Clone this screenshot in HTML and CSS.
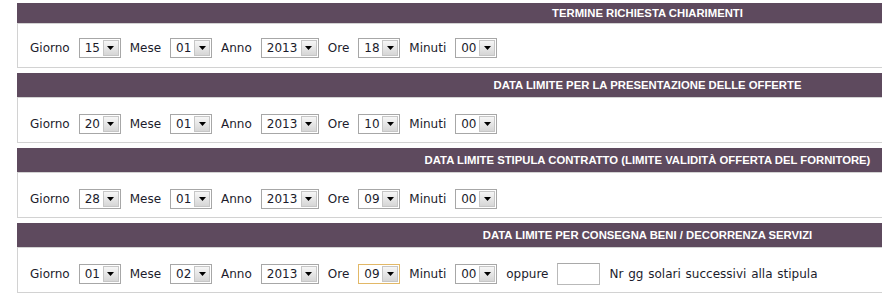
FILE: index.html
```html
<!DOCTYPE html>
<html lang="it">
<head>
    <meta charset="UTF-8">
    <title>Date e scadenze</title>
    <link rel="stylesheet" href="styles.css">
</head>
<body>
    <div class="page">

        <div class="section">
            <div class="head">TERMINE RICHIESTA CHIARIMENTI</div>
            <div class="row">
                <span class="lbl">Giorno</span>
                <span class="dd"><span class="val">15</span><span class="btn"><svg width="7" height="4" viewBox="0 0 7 4"><path d="M0 0h7L3.5 4z"/></svg></span></span>
                <span class="lbl">Mese</span>
                <span class="dd"><span class="val">01</span><span class="btn"><svg width="7" height="4" viewBox="0 0 7 4"><path d="M0 0h7L3.5 4z"/></svg></span></span>
                <span class="lbl">Anno</span>
                <span class="dd year"><span class="val">2013</span><span class="btn"><svg width="7" height="4" viewBox="0 0 7 4"><path d="M0 0h7L3.5 4z"/></svg></span></span>
                <span class="lbl">Ore</span>
                <span class="dd"><span class="val">18</span><span class="btn"><svg width="7" height="4" viewBox="0 0 7 4"><path d="M0 0h7L3.5 4z"/></svg></span></span>
                <span class="lbl">Minuti</span>
                <span class="dd"><span class="val">00</span><span class="btn"><svg width="7" height="4" viewBox="0 0 7 4"><path d="M0 0h7L3.5 4z"/></svg></span></span>
            </div>
        </div>

        <div class="section">
            <div class="head">DATA LIMITE PER LA PRESENTAZIONE DELLE OFFERTE</div>
            <div class="row">
                <span class="lbl">Giorno</span>
                <span class="dd"><span class="val">20</span><span class="btn"><svg width="7" height="4" viewBox="0 0 7 4"><path d="M0 0h7L3.5 4z"/></svg></span></span>
                <span class="lbl">Mese</span>
                <span class="dd"><span class="val">01</span><span class="btn"><svg width="7" height="4" viewBox="0 0 7 4"><path d="M0 0h7L3.5 4z"/></svg></span></span>
                <span class="lbl">Anno</span>
                <span class="dd year"><span class="val">2013</span><span class="btn"><svg width="7" height="4" viewBox="0 0 7 4"><path d="M0 0h7L3.5 4z"/></svg></span></span>
                <span class="lbl">Ore</span>
                <span class="dd"><span class="val">10</span><span class="btn"><svg width="7" height="4" viewBox="0 0 7 4"><path d="M0 0h7L3.5 4z"/></svg></span></span>
                <span class="lbl">Minuti</span>
                <span class="dd"><span class="val">00</span><span class="btn"><svg width="7" height="4" viewBox="0 0 7 4"><path d="M0 0h7L3.5 4z"/></svg></span></span>
            </div>
        </div>

        <div class="section">
            <div class="head">DATA LIMITE STIPULA CONTRATTO (LIMITE VALIDITÀ OFFERTA DEL FORNITORE)</div>
            <div class="row">
                <span class="lbl">Giorno</span>
                <span class="dd"><span class="val">28</span><span class="btn"><svg width="7" height="4" viewBox="0 0 7 4"><path d="M0 0h7L3.5 4z"/></svg></span></span>
                <span class="lbl">Mese</span>
                <span class="dd"><span class="val">01</span><span class="btn"><svg width="7" height="4" viewBox="0 0 7 4"><path d="M0 0h7L3.5 4z"/></svg></span></span>
                <span class="lbl">Anno</span>
                <span class="dd year"><span class="val">2013</span><span class="btn"><svg width="7" height="4" viewBox="0 0 7 4"><path d="M0 0h7L3.5 4z"/></svg></span></span>
                <span class="lbl">Ore</span>
                <span class="dd"><span class="val">09</span><span class="btn"><svg width="7" height="4" viewBox="0 0 7 4"><path d="M0 0h7L3.5 4z"/></svg></span></span>
                <span class="lbl">Minuti</span>
                <span class="dd"><span class="val">00</span><span class="btn"><svg width="7" height="4" viewBox="0 0 7 4"><path d="M0 0h7L3.5 4z"/></svg></span></span>
            </div>
        </div>

        <div class="section">
            <div class="head">DATA LIMITE PER CONSEGNA BENI / DECORRENZA SERVIZI</div>
            <div class="row">
                <span class="lbl">Giorno</span>
                <span class="dd"><span class="val">01</span><span class="btn"><svg width="7" height="4" viewBox="0 0 7 4"><path d="M0 0h7L3.5 4z"/></svg></span></span>
                <span class="lbl">Mese</span>
                <span class="dd"><span class="val">02</span><span class="btn"><svg width="7" height="4" viewBox="0 0 7 4"><path d="M0 0h7L3.5 4z"/></svg></span></span>
                <span class="lbl">Anno</span>
                <span class="dd year"><span class="val">2013</span><span class="btn"><svg width="7" height="4" viewBox="0 0 7 4"><path d="M0 0h7L3.5 4z"/></svg></span></span>
                <span class="lbl">Ore</span>
                <span class="dd focus"><span class="val">09</span><span class="btn"><svg width="7" height="4" viewBox="0 0 7 4"><path d="M0 0h7L3.5 4z"/></svg></span></span>
                <span class="lbl">Minuti</span>
                <span class="dd"><span class="val">00</span><span class="btn"><svg width="7" height="4" viewBox="0 0 7 4"><path d="M0 0h7L3.5 4z"/></svg></span></span>
                <span class="lbl">oppure</span>
                <input type="text" class="days">
                <span class="lbl">Nr gg solari successivi alla stipula</span>
            </div>
        </div>

    </div>
</body>
</html>
```

FILE: styles.css
```css
* {
    box-sizing: border-box;
}

body {
    margin: 0;
    padding: 0;
    background: #fff;
    font-family: "DejaVu Sans", Verdana, sans-serif;
    font-size: 12px;
    color: #1c1c2c;
    overflow: hidden;
}

.page {
    padding: 3px 0 0 17px;
}

.section {
    margin-bottom: 5px;
}

.head {
    height: 25px;
    line-height: 24px;
    padding-left: 396px;
    background: #5e4a5e;
    color: #fff;
    font-family: "Liberation Sans", Arial, sans-serif;
    font-size: 11.3px;
    font-weight: bold;
    text-align: center;
    white-space: nowrap;
    border-bottom: 1px solid #d2d2d2;
}

.section:first-child .head {
    height: 21px;
    line-height: 20px;
}

.row {
    display: flex;
    align-items: center;
    gap: 9px;
    height: 45px;
    padding: 7px 0 0 12px;
    border-left: 1px solid #d2d2d2;
    border-bottom: 1px solid #d2d2d2;
    word-spacing: 1px;
}

.section:first-child .row {
    height: 44px;
    padding-top: 4px;
}

.lbl {
    white-space: nowrap;
}

.dd {
    display: flex;
    align-items: center;
    width: 42px;
    height: 20px;
    padding: 1px;
    border: 1px solid #a7a7a7;
    background: #fff;
}

.dd.year {
    width: 58px;
}

.dd.focus {
    border-color: #e2b867;
}

.val {
    flex: 1;
    padding-left: 4px;
    line-height: 16px;
}

.btn {
    display: flex;
    align-items: center;
    justify-content: center;
    width: 16px;
    height: 16px;
    border: 1px solid #c6c6c6;
    background: linear-gradient(#f6f6f6, #d6d6d6);
}

.btn svg {
    fill: #000;
}

.days {
    width: 43px;
    height: 22px;
    margin: 0;
    border: 1px solid #b9b9b9;
    border-top-color: #a9a9a9;
    background: #fff;
}
```
